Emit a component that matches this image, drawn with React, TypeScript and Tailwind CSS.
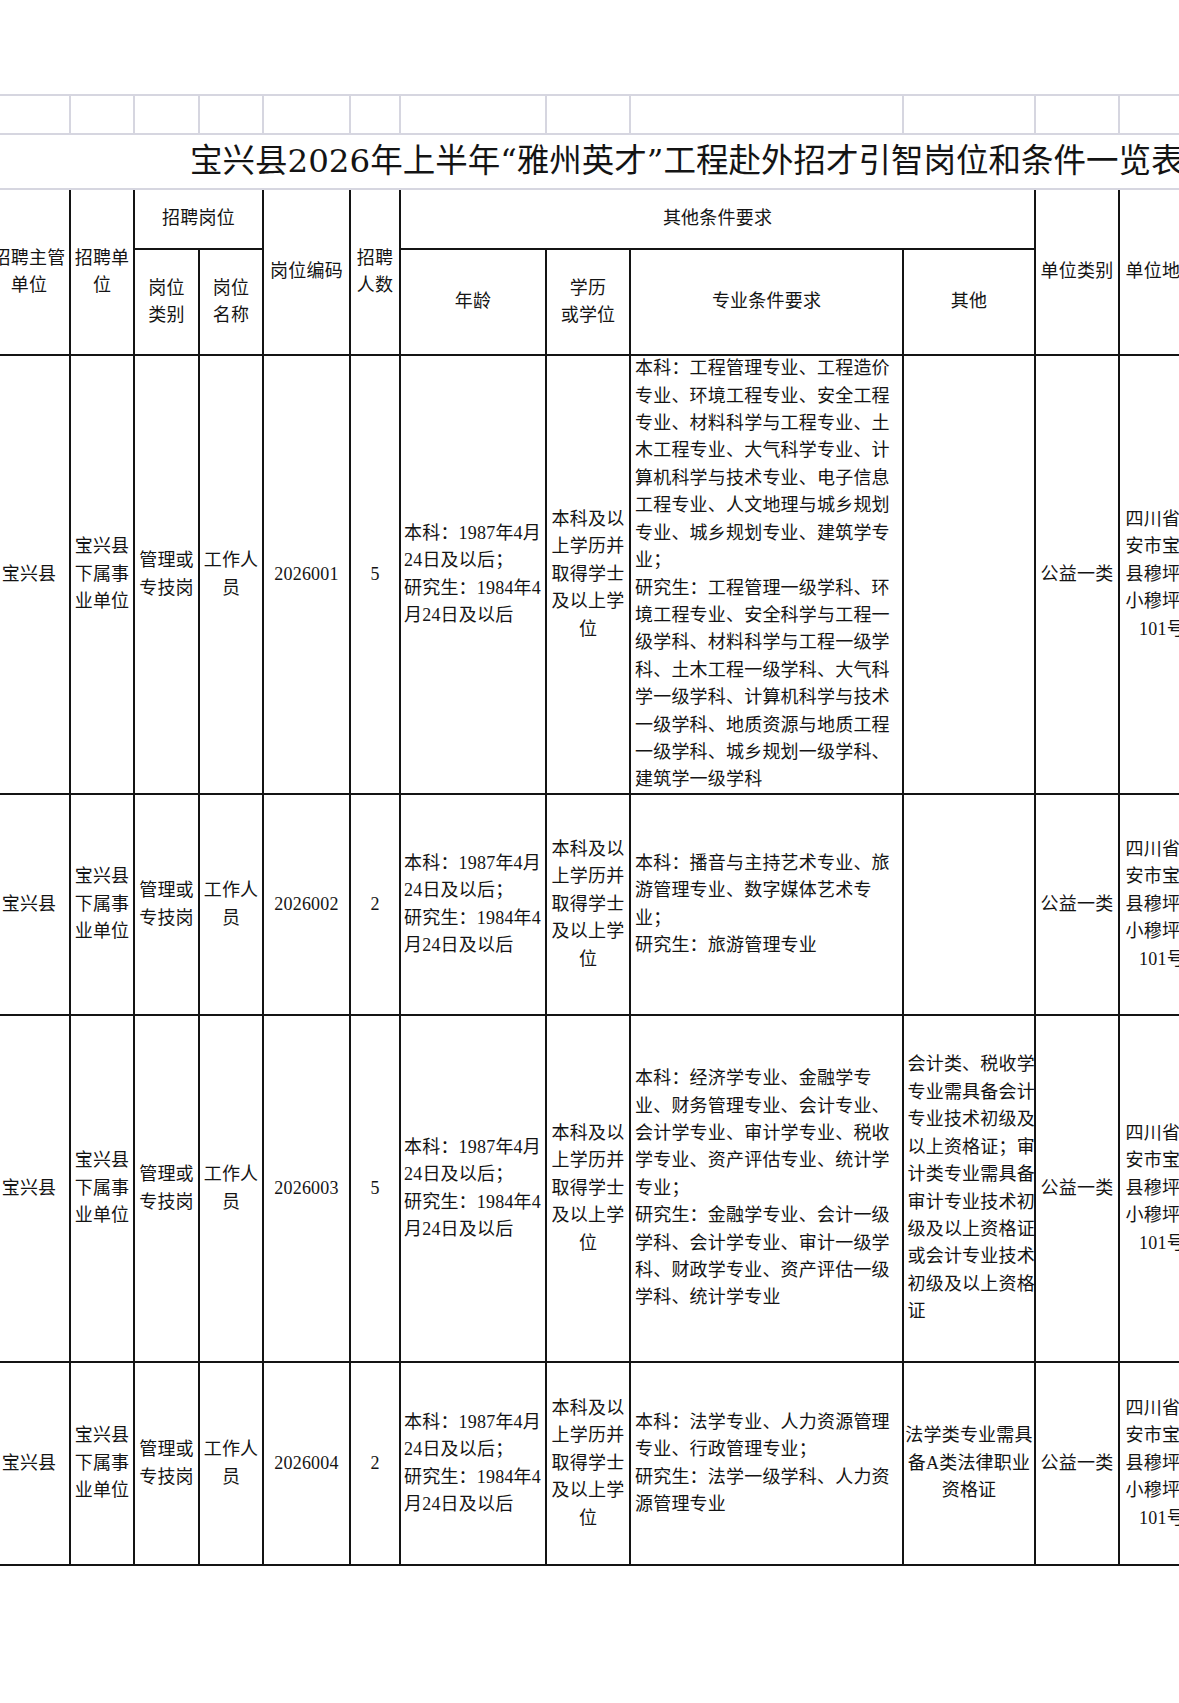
import React from 'react';

type Row = {
  code: string;
  n: string;
  major: string[];
  other: string[];
  otherCenter: boolean;
};

const rows: Row[] = [
  {
    code: '2026001',
    n: '5',
    major: [
      '本科：工程管理专业、工程造价',
      '专业、环境工程专业、安全工程',
      '专业、材料科学与工程专业、土',
      '木工程专业、大气科学专业、计',
      '算机科学与技术专业、电子信息',
      '工程专业、人文地理与城乡规划',
      '专业、城乡规划专业、建筑学专',
      '业；',
      '研究生：工程管理一级学科、环',
      '境工程专业、安全科学与工程一',
      '级学科、材料科学与工程一级学',
      '科、土木工程一级学科、大气科',
      '学一级学科、计算机科学与技术',
      '一级学科、地质资源与地质工程',
      '一级学科、城乡规划一级学科、',
      '建筑学一级学科',
    ],
    other: [],
    otherCenter: false,
  },
  {
    code: '2026002',
    n: '2',
    major: [
      '本科：播音与主持艺术专业、旅',
      '游管理专业、数字媒体艺术专',
      '业；',
      '研究生：旅游管理专业',
    ],
    other: [],
    otherCenter: false,
  },
  {
    code: '2026003',
    n: '5',
    major: [
      '本科：经济学专业、金融学专',
      '业、财务管理专业、会计专业、',
      '会计学专业、审计学专业、税收',
      '学专业、资产评估专业、统计学',
      '专业；',
      '研究生：金融学专业、会计一级',
      '学科、会计学专业、审计一级学',
      '科、财政学专业、资产评估一级',
      '学科、统计学专业',
    ],
    other: [
      '会计类、税收学',
      '专业需具备会计',
      '专业技术初级及',
      '以上资格证；审',
      '计类专业需具备',
      '审计专业技术初',
      '级及以上资格证',
      '或会计专业技术',
      '初级及以上资格',
      '证',
    ],
    otherCenter: false,
  },
  {
    code: '2026004',
    n: '2',
    major: [
      '本科：法学专业、人力资源管理',
      '专业、行政管理专业；',
      '研究生：法学一级学科、人力资',
      '源管理专业',
    ],
    other: ['法学类专业需具', '备A类法律职业', '资格证'],
    otherCenter: true,
  },
];

const ageLines = ['本科：1987年4月', '24日及以后；', '研究生：1984年4', '月24日及以后'];

function Cell({ children, className = '' }: { children?: React.ReactNode; className?: string }) {
  return (
    <div className={`flex flex-col justify-center border-r-2 border-b-2 border-[#141414] text-center ${className}`}>
      {children}
    </div>
  );
}

function Lines({ lines }: { lines: string[] }) {
  return (
    <>
      {lines.map((l, i) => (
        <div key={i} className="whitespace-nowrap">
          {l}
        </div>
      ))}
    </>
  );
}

export default function App() {
  const grayCells = Array.from({ length: 12 });
  return (
    <div className="w-[1179px] h-[1703px] overflow-hidden bg-white text-[#141414]">
      <div className="h-[94px]" />
      <div className="-ml-[11px] w-[1217px] grid grid-cols-[82px_64px_65px_64px_87px_50px_146px_84px_273px_132px_84px_86px] grid-rows-[41px_55px_60px_106px_439px_221px_347px_203px] font-['Liberation_Serif','Noto_Sans_CJK_SC',serif] text-[18px] leading-[27.4px] tracking-[0.2px]">
        {grayCells.map((_, i) => (
          <div key={i} className="border-t-2 border-r-2 border-b-2 border-[#d6d6e0]" />
        ))}
        <div className="col-span-12 flex items-center border-b-2 border-[#d6d6e0] pl-[201px] whitespace-nowrap font-['DejaVu_Serif','Noto_Sans_CJK_SC',serif] text-[32.5px] leading-none tracking-normal">
          宝兴县2026年上半年“雅州英才”工程赴外招才引智岗位和条件一览表
        </div>

        {/* header row A */}
        <Cell className="row-span-2">招聘主管单位</Cell>
        <Cell className="row-span-2">招聘单位</Cell>
        <Cell className="col-span-2">招聘岗位</Cell>
        <Cell className="row-span-2">岗位编码</Cell>
        <Cell className="row-span-2">招聘人数</Cell>
        <Cell className="col-span-4">其他条件要求</Cell>
        <Cell className="row-span-2">单位类别</Cell>
        <Cell className="row-span-2 whitespace-nowrap">单位地址</Cell>

        {/* header row B */}
        <Cell>
          岗位
          <br />
          类别
        </Cell>
        <Cell>
          岗位
          <br />
          名称
        </Cell>
        <Cell>年龄</Cell>
        <Cell>
          学历
          <br />
          或学位
        </Cell>
        <Cell>专业条件要求</Cell>
        <Cell>其他</Cell>

        {rows.map((r) => (
          <React.Fragment key={r.code}>
            <Cell>宝兴县</Cell>
            <Cell>宝兴县下属事业单位</Cell>
            <Cell>管理或专技岗</Cell>
            <Cell>工作人员</Cell>
            <Cell>{r.code}</Cell>
            <Cell>{r.n}</Cell>
            <Cell className="text-left pl-[3px]">
              <Lines lines={ageLines} />
            </Cell>
            <Cell>本科及以上学历并取得学士及以上学位</Cell>
            <Cell className="text-left pl-[4px]">
              <Lines lines={r.major} />
            </Cell>
            <Cell className={r.otherCenter ? 'items-center' : 'text-left pl-[3.5px]'}>
              <Lines lines={r.other} />
            </Cell>
            <Cell>公益一类</Cell>
            <Cell>四川省雅安市宝兴县穆坪镇小穆坪街101号</Cell>
          </React.Fragment>
        ))}
      </div>
    </div>
  );
}
